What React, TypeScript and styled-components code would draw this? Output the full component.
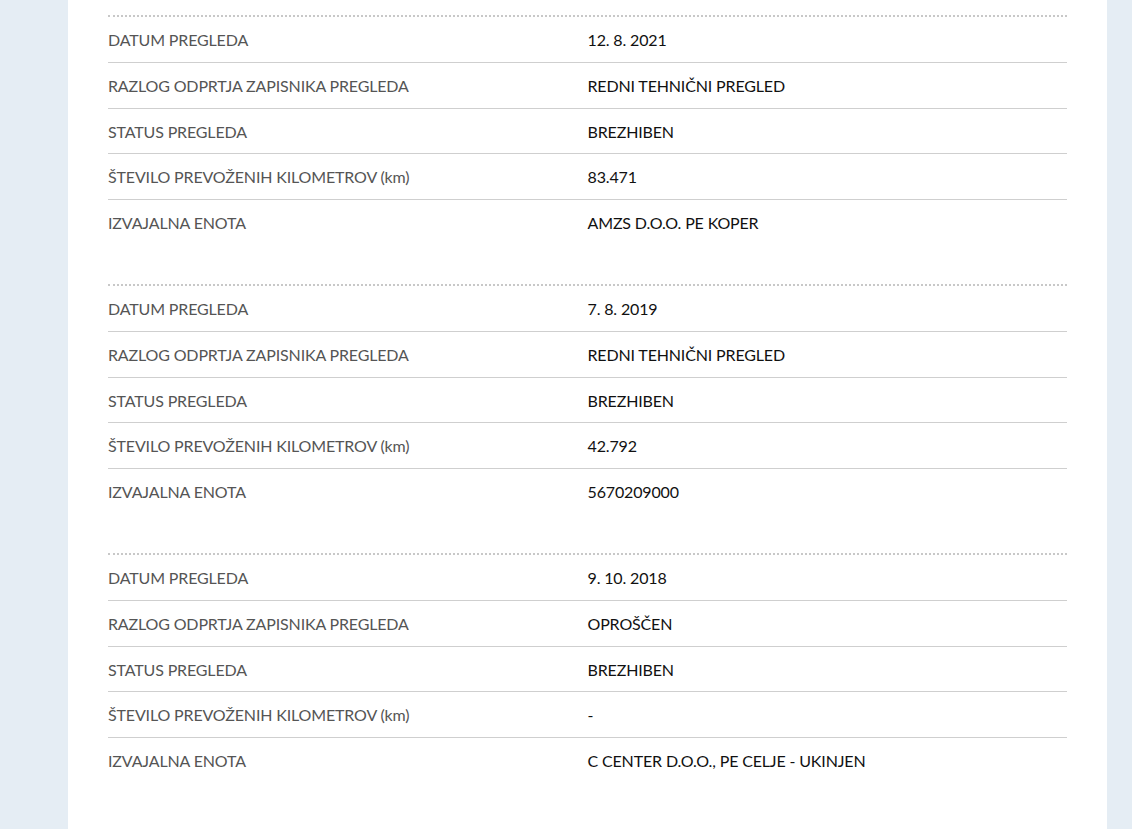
import styled, { createGlobalStyle } from 'styled-components';

type Inspection = {
  date: string;
  reason: string;
  status: string;
  km: string;
  unit: string;
};

const inspections: Inspection[] = [
  {
    date: '12. 8. 2021',
    reason: 'REDNI TEHNIČNI PREGLED',
    status: 'BREZHIBEN',
    km: '83.471',
    unit: 'AMZS D.O.O. PE KOPER',
  },
  {
    date: '7. 8. 2019',
    reason: 'REDNI TEHNIČNI PREGLED',
    status: 'BREZHIBEN',
    km: '42.792',
    unit: '5670209000',
  },
  {
    date: '9. 10. 2018',
    reason: 'OPROŠČEN',
    status: 'BREZHIBEN',
    km: '-',
    unit: 'C CENTER D.O.O., PE CELJE - UKINJEN',
  },
];

function App() {
  return (
    <>
      <GlobalStyle />
      <Panel>
        {inspections.map((item, i) => (
          <Group key={i}>
            <Row>
              <Label>DATUM PREGLEDA</Label>
              <Value>{item.date}</Value>
            </Row>
            <Row>
              <Label>RAZLOG ODPRTJA ZAPISNIKA PREGLEDA</Label>
              <Value>{item.reason}</Value>
            </Row>
            <Row>
              <Label>STATUS PREGLEDA</Label>
              <Value>{item.status}</Value>
            </Row>
            <Row>
              <Label>ŠTEVILO PREVOŽENIH KILOMETROV (km)</Label>
              <Value>{item.km}</Value>
            </Row>
            <Row>
              <Label>IZVAJALNA ENOTA</Label>
              <Value>{item.unit}</Value>
            </Row>
          </Group>
        ))}
      </Panel>
    </>
  );
}

export default App;

const GlobalStyle = createGlobalStyle`
  html, body {
    margin: 0;
    padding: 0;
    background: #e5edf4;
    font-family: Lato, 'Open Sans', sans-serif;
    overflow: hidden;
  }
`;

const Panel = styled.div`
  margin-left: 68px;
  width: 1039px;
  box-sizing: border-box;
  min-height: 829px;
  background: #ffffff;
  padding: 15px 40px 40px;
`;

const Group = styled.div`
  border-top: 2px dotted #c8c8c8;
  margin-bottom: 39px;
`;

const Row = styled.div`
  display: grid;
  grid-template-columns: 1fr 1fr;
  padding: 13px 0 11px;
  line-height: 20.8px;
  font-size: 16px;
  letter-spacing: -0.15px;
  border-bottom: 1px solid #cfcfcf;

  &:last-child {
    border-bottom: none;
  }
`;

const Label = styled.div`
  color: #555555;
`;

const Value = styled.div`
  color: #111111;
`;
